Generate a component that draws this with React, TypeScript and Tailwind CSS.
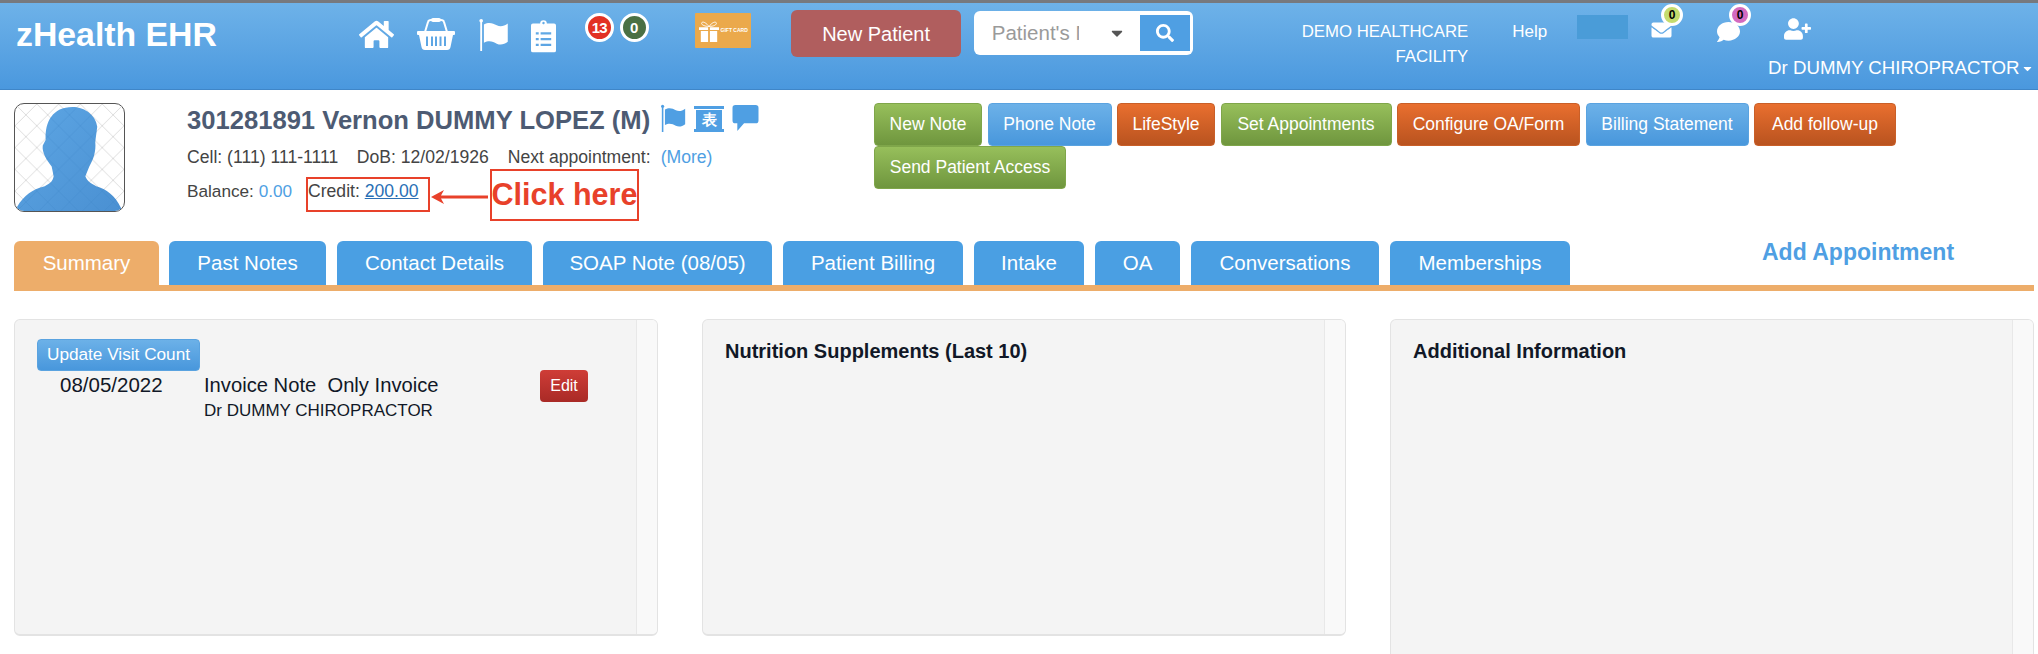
import { FC, ReactNode } from "react";
import { FaCaretDown, FaComment, FaEnvelope, FaHome, FaSearch, FaUserPlus } from "react-icons/fa";

const BLUE = "bg-gradient-to-b from-[#6cb1e8] to-[#4897dc] border-[#5aa3e0]";
const GREEN = "bg-gradient-to-b from-[#97bf5b] to-[#6f963e] border-[#7fa64a]";
const ORANGE = "bg-gradient-to-b from-[#e96f2f] to-[#b9531f] border-[#c95f28]";

const BUST =
  "M31 36C30 18 38 3 58 3 72 3 82 13 83 23L81 38C82 48 79 56 75 63L71 73C73 78 76 80 82 83 92 86 101 92 107 105V108H2V104C9 92 18 86 30 83 36 80 38 78 39 73L37 63C32 57 27 49 28 42z";

const actions = [
  { label: "New Note", w: "w-[108px]", color: GREEN },
  { label: "Phone Note", w: "w-[124px]", color: BLUE },
  { label: "LifeStyle", w: "w-[98px]", color: ORANGE },
  { label: "Set Appointments", w: "w-[171px]", color: GREEN },
  { label: "Configure OA/Form", w: "w-[183px]", color: ORANGE },
  { label: "Billing Statement", w: "w-[163px]", color: BLUE },
  { label: "Add follow-up", w: "w-[142px]", color: ORANGE },
  { label: "Send Patient Access", w: "w-[192px]", color: GREEN },
];

const tabs = [
  { label: "Past Notes", w: "w-[157px]" },
  { label: "Contact Details", w: "w-[195px]" },
  { label: "SOAP Note (08/05)", w: "w-[229px]" },
  { label: "Patient Billing", w: "w-[180px]" },
  { label: "Intake", w: "w-[110px]" },
  { label: "OA", w: "w-[85px]" },
  { label: "Conversations", w: "w-[188px]" },
  { label: "Memberships", w: "w-[180px]" },
];

const FlagIcon: FC<{ className?: string }> = ({ className }) => (
  <svg viewBox="0 0 32 36" className={className} fill="currentColor">
    <circle cx="2" cy="3" r="2" />
    <rect x="1" y="3" width="2" height="33" />
    <path d="M5 7c6-3 10-1 14 1s8 1 12-2v20c-4 3-8 4-12 2s-8-4-14-1z" />
  </svg>
);

const BasketIcon: FC<{ className?: string }> = ({ className }) => (
  <svg viewBox="0 0 38 32" className={className} fill="none" stroke="currentColor">
    <path d="M8 14 11 4Q11.500 2 14 2H24Q26.500 2 27 4L30 14" strokeWidth="2" />
    <rect x="14" y="0" width="10" height="4" rx="2" fill="currentColor" stroke="none" />
    <path
      fillRule="evenodd"
      stroke="none"
      fill="currentColor"
      d="M1 13H37a1 1 0 0 1 1 1v2a1 1 0 0 1-1 1H36L33.500 29Q33 32 30 32H8Q5 32 4.500 29L2 17H1a1 1 0 0 1-1-1v-2a1 1 0 0 1 1-1zM9 18.500V28h2V18.500zM14 18.500V28h2V18.500zM18 18.500V28h2V18.500zM22.500 18.500V28h2V18.500zM27 18.500V28h2V18.500z"
    />
  </svg>
);

const ClipboardIcon: FC<{ className?: string }> = ({ className }) => (
  <svg viewBox="0 0 26 34" className={className} fill="currentColor">
    <path
      fillRule="evenodd"
      d="M2 4H9.500a3.500 3.500 0 0 1 7 0H24a2 2 0 0 1 2 2V32a2 2 0 0 1-2 2H2a2 2 0 0 1-2-2V6a2 2 0 0 1 2-2zM12 2.800a1.200 1.200 0 0 0 2 1.500 1.200 1.200 0 0 0-2-1.500zM5 13v2.500h3V13zM10 13v2.500h11V13zM5 19v2.500h3V19zM10 19v2.500h11V19zM5 25v2.500h3V25zM10 25v2.500h11V25z"
    />
  </svg>
);

const GiftCard: FC = () => (
  <div className="ml-[46px] mt-[10px] flex h-[35px] w-[57px] items-center gap-[2px] rounded-[1px] bg-[#eba94b] pl-[4px] text-white">
    <svg viewBox="0 0 22 24" className="h-[24px] w-[20px] shrink-0" fill="currentColor">
      <path d="M11 7C8 3 4 1 3 3s3 4 8 4c5 0 9-2 8-4s-5 0-8 4z" fill="none" stroke="currentColor" strokeWidth="1" />
      <path d="M0 8h10v3H0zM12 8h10v3H12zM2 12h8v12H2zM12 12h8v12h-8z" />
    </svg>
    <span className="text-[5px] font-bold leading-none whitespace-nowrap">GIFT CARD</span>
  </div>
);

const CountBadge: FC<{ value: string; color: string; className: string }> = ({ value, color, className }) => (
  <span
    className={`flex items-center justify-center rounded-full border-[3px] border-white font-bold leading-none ${color} ${className}`}
  >
    {value}
  </span>
);

const ScrollIcon: FC = () => (
  <span className="ml-[7px] mb-[3px] flex h-[26px] w-[30px] flex-col items-center">
    <span className="h-[3px] w-[30px] bg-[#4f9fe3]" />
    <span className="mt-[1px] flex h-[19px] w-[26px] items-center justify-center bg-[#4f9fe3] text-[15px] leading-none font-bold text-white">
      表
    </span>
    <span className="h-[3px] w-[30px] bg-[#4f9fe3]" />
  </span>
);

const Avatar: FC = () => (
  <div className="ml-[14px] mt-[13px] h-[109px] w-[111px] overflow-hidden rounded-[10px] border border-[#555] bg-white">
    <svg viewBox="0 0 110 108" className="h-full w-full">
      <defs>
        <pattern id="lattice" width="22" height="22" patternUnits="userSpaceOnUse">
          <path d="M0 0 22 22M22 0 0 22" stroke="#dddddd" strokeWidth="1" />
        </pattern>
        <pattern id="lattice-dark" width="22" height="22" patternUnits="userSpaceOnUse">
          <path d="M0 0 22 22M22 0 0 22" stroke="#3f86c8" strokeOpacity="0.35" strokeWidth="1" />
        </pattern>
        <linearGradient id="bust" x1="0" y1="0" x2="1" y2="1">
          <stop offset="0" stopColor="#5da6e4" />
          <stop offset="1" stopColor="#4a90d2" />
        </linearGradient>
      </defs>
      <rect width="110" height="108" fill="url(#lattice)" />
      <path fill="url(#bust)" d={BUST} />
      <path fill="url(#lattice-dark)" d={BUST} />
    </svg>
  </div>
);

const Panel: FC<{ tall?: boolean; children?: ReactNode }> = ({ tall, children }) => (
  <div
    className={`flex w-[644px] shrink-0 overflow-hidden rounded-[6px] border border-b-2 border-[#e3e3e3] bg-[#f4f4f4] ${
      tall ? "h-[400px]" : "h-[317px]"
    }`}
  >
    <div className="min-w-0 flex-1">{children}</div>
    <div className="w-[21px] border-l border-[#e8e8e8] bg-[#f9f9f9]" />
  </div>
);

const App: FC = () => {
  return (
    <div className="h-[654px] w-[2038px] overflow-hidden bg-white font-['Liberation_Sans',Arial,sans-serif]">
      {/* header */}
      <div className="h-[90px] border-b border-[#3f86c8] bg-gradient-to-b from-[#6fb3e9] to-[#4a98de] text-white">
        <div className="h-[3px] bg-[#77797e]" />
        <div className="flex">
          <div className="w-[360px] pl-[16px] pt-[13px] text-[33.8px] leading-[36px] font-bold whitespace-nowrap">
            zHealth EHR
          </div>
          <div className="flex pt-[15px]">
            <FaHome className="h-[33px] w-[35px]" />
            <BasketIcon className="ml-[23px] h-[32px] w-[38px]" />
            <FlagIcon className="ml-[23px] h-[33px] w-[32px]" />
            <ClipboardIcon className="ml-[21px] h-[36px] w-[25px]" />
          </div>
          <CountBadge value="13" color="bg-[#e23124]" className="ml-[29px] mt-[10px] h-[29px] w-[29px] text-[15px] tracking-[-1px]" />
          <CountBadge value="0" color="bg-[#4a7044]" className="ml-[6px] mt-[10px] h-[29px] w-[29px] text-[15px]" />
          <GiftCard />

          <button className="ml-[40px] mt-[7px] h-[47px] w-[170px] rounded-[6px] bg-[#b05e5e] text-[20px]">
            New Patient
          </button>
          <div className="ml-[13px] mt-[8px] flex h-[44px] w-[220px] items-center rounded-[6px] bg-white pr-[3px]">
            <input
              readOnly
              placeholder="Patient's Name"
              className="w-[105px] bg-transparent pl-[18px] text-[20.5px] outline-none placeholder:text-[#9a9a9a]"
            />
            <FaCaretDown className="ml-[29px] h-[18px] w-[18px] text-[#555]" />
            <span className="ml-auto flex h-[36px] w-[50px] items-center justify-center bg-[#4f9fe3]">
              <FaSearch className="h-[18px] w-[18px]" />
            </span>
          </div>

          <div className="ml-[76px] w-[200px] pt-[16px] text-right text-[16.8px] leading-[25px] whitespace-nowrap">
            DEMO HEALTHCARE
            <br />
            FACILITY
          </div>
          <div className="ml-[44px] pt-[16px] text-[17px] leading-[25px]">Help</div>
          <div className="ml-[30px] mt-[12px] h-[24px] w-[51px] bg-[#4a9cd8]" />

          <div className="relative ml-[23px] mt-[17px] h-[20px] w-[21px]">
            <FaEnvelope className="h-[20px] w-[21px]" />
            <CountBadge value="0" color="bg-[#c5dc6e] text-black" className="absolute left-[10px] top-[-16px] h-[22px] w-[22px] text-[12px]" />
          </div>
          <div className="relative ml-[45px] mt-[17px] h-[24px] w-[23px]">
            <FaComment className="h-[24px] w-[23px]" />
            <CountBadge value="0" color="bg-[#d36ac0] text-black" className="absolute left-[12px] top-[-16px] h-[22px] w-[22px] text-[12px]" />
          </div>

          <div className="ml-[28px] flex w-[270px] shrink-0 flex-col pt-[15px]">
            <FaUserPlus className="ml-[16px] h-[22px] w-[27px]" />
            <div className="mt-[18px] flex items-center text-[18.7px] leading-[20px] whitespace-nowrap">
              Dr DUMMY CHIROPRACTOR
              <FaCaretDown className="ml-[1px] h-[13px] w-[13px]" />
            </div>
          </div>
        </div>
      </div>

      {/* patient */}
      <div className="flex h-[151px]">
        <Avatar />
        <div className="ml-[62px] w-[687px] shrink-0 pt-[12px] text-[#444]">
          <div className="flex h-[36px] items-center text-[25.6px] font-bold whitespace-nowrap text-[#4d5b73]">
            301281891 Vernon DUMMY LOPEZ (M)
            <FlagIcon className="ml-[10px] mb-[4px] h-[28px] w-[27px] text-[#4f9fe3]" />
            <ScrollIcon />
            <svg viewBox="0 0 27 27" className="ml-[8px] mb-[5px] h-[26px] w-[27px] text-[#4f9fe3]" fill="currentColor">
              <path d="M3 0H24a3 3 0 0 1 3 3V16a3 3 0 0 1-3 3H12L5 27V19H3a3 3 0 0 1-3-3V3a3 3 0 0 1 3-3z" />
            </svg>
          </div>
          <div className="mt-[8px] flex h-[22px] items-center text-[17.6px] whitespace-nowrap">
            <span>Cell: (111) 111-1111</span>
            <span className="ml-[18.500px]">DoB: 12/02/1926</span>
            <span className="ml-[19px]">Next appointment:</span>
            <span className="ml-[10px] text-[#4f9fe3]">(More)</span>
          </div>
          <div className="mt-[1px] flex items-start text-[17.6px] whitespace-nowrap">
            <span className="mt-[10px] w-[108px] text-[17.2px] leading-[24px]">
              Balance: <span className="text-[#4f9fe3]">0.00</span>
            </span>
            <div className="ml-[11px] mt-[8px] flex h-[35px] w-[124px] shrink-0 items-center border-2 border-[#e8412a] pb-[6px]">
              Credit:&nbsp;<span className="text-[#2a6fb5] underline">200.00</span>
            </div>
            <svg viewBox="0 0 60 14" className="mt-[21px] h-[14px] w-[60px] shrink-0 text-[#e8412a]" fill="currentColor">
              <path d="M1 7 14 0 11 5.500H58V8.500H11L14 14z" />
            </svg>
            <div className="flex h-[52px] w-[149px] shrink-0 items-center justify-center border-2 border-[#e8412a] text-[30.5px] font-bold text-[#e8412a]">
              Click here
            </div>
          </div>
        </div>
        <div className="flex h-[99px] w-[1040px] flex-wrap content-start gap-x-[5.500px] pt-[13px]">
          {actions.map((a) => (
            <button
              key={a.label}
              className={`h-[43px] rounded-[4px] border text-center text-[17.5px] whitespace-nowrap text-white ${a.w} ${a.color}`}
            >
              {a.label}
            </button>
          ))}
        </div>
      </div>

      {/* tabs */}
      <div className="ml-[14px] mr-[4px] flex h-[50px] border-b-[6px] border-[#edad6a]">
        <div className="flex w-[145px] items-center justify-center rounded-t-[6px] bg-[#edad6a] text-[20.5px] text-white">
          Summary
        </div>
        <div className="ml-[10px] flex gap-[11px]">
          {tabs.map((t) => (
            <div
              key={t.label}
              className={`flex items-center justify-center rounded-t-[6px] bg-[#4a9fe3] text-[20.5px] whitespace-nowrap text-white ${t.w}`}
            >
              {t.label}
            </div>
          ))}
        </div>
        <div className="ml-[192px] text-[23px] leading-[22px] font-bold whitespace-nowrap text-[#4f9fe3]">
          Add Appointment
        </div>
      </div>

      {/* panels */}
      <div className="ml-[14px] mt-[28px] flex gap-[44px] text-[#111827]">
        <Panel>
          <div className="relative pl-[22px] pt-[19px]">
            <button className="h-[32px] w-[163px] rounded-[4px] border border-[#5aa3e0] bg-gradient-to-b from-[#6cb1e8] to-[#4897dc] text-[17.2px] whitespace-nowrap text-white">
              Update Visit Count
            </button>
            <div className="flex">
              <div className="ml-[23px] w-[144px] pt-[2px] text-[20.5px] leading-[24px]">08/05/2022</div>
              <div>
                <div className="pt-[2px] text-[20.2px] leading-[24px] whitespace-pre">Invoice Note  Only Invoice</div>
                <div className="pt-[2px] text-[17px] leading-[24px]">Dr DUMMY CHIROPRACTOR</div>
              </div>
            </div>
            <button className="absolute left-[525px] top-[50px] h-[32px] w-[48px] rounded-[4px] bg-gradient-to-b from-[#cf3d37] to-[#a92a26] text-[16px] text-white">
              Edit
            </button>
          </div>
        </Panel>
        <Panel>
          <div className="pl-[22px] pt-[20px] text-[20px] leading-[22px] font-bold">Nutrition Supplements (Last 10)</div>
        </Panel>
        <Panel tall>
          <div className="pl-[22px] pt-[20px] text-[20px] leading-[22px] font-bold">Additional Information</div>
        </Panel>
      </div>
    </div>
  );
};

export default App;
